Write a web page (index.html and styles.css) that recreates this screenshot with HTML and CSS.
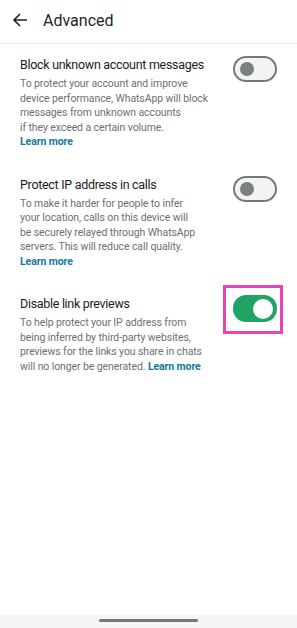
FILE: index.html
```html
<!DOCTYPE html>
<html lang="en">

<head>
    <meta charset="UTF-8">
    <meta name="viewport" content="width=device-width, initial-scale=1.0">
    <title>Advanced</title>
    <link rel="stylesheet" href="styles.css">
</head>

<body>
    <div class="screen">
        <header class="top-bar">
            <svg class="back" width="16" height="16" viewBox="0 0 16 16">
                <path d="M15 8H2M8 2L2 8l6 6" fill="none" stroke="#1f1f1f" stroke-width="1.6" />
            </svg>
            <h1>Advanced</h1>
        </header>

        <main class="settings">
            <div class="row">
                <div class="text">
                    <div class="title">Block unknown account messages</div>
                    <p class="desc">To protect your account and improve<br>device performance, WhatsApp will block<br>messages from unknown accounts<br>if they exceed a certain volume.<br><a href="#" class="link">Learn more</a></p>
                </div>
                <div class="switch"><span class="knob"></span></div>
            </div>

            <div class="row">
                <div class="text">
                    <div class="title">Protect IP address in calls</div>
                    <p class="desc">To make it harder for people to infer<br>your location, calls on this device will<br>be securely relayed through WhatsApp<br>servers. This will reduce call quality.<br><a href="#" class="link">Learn more</a></p>
                </div>
                <div class="switch"><span class="knob"></span></div>
            </div>

            <div class="row">
                <div class="text">
                    <div class="title">Disable link previews</div>
                    <p class="desc">To help protect your IP address from<br>being inferred by third-party websites,<br>previews for the links you share in chats<br>will no longer be generated. <a href="#" class="link">Learn more</a></p>
                </div>
                <div class="highlight">
                    <div class="switch on"><span class="knob"></span></div>
                </div>
            </div>
        </main>

        <div class="nav-bar"><span class="handle"></span></div>
    </div>
</body>

</html>
```

FILE: styles.css
```css
body {
    margin: 0;
    font-family: Roboto, 'Noto Sans', sans-serif;
    background-color: #fff;
}

.screen {
    height: 628px;
    display: flex;
    flex-direction: column;
}

.top-bar {
    height: 43px;
    display: flex;
    align-items: center;
    padding-left: 12px;
    border-bottom: 1px solid #ededed;
    box-sizing: content-box;
}

.back {
    margin-right: 15px;
    margin-top: -3px;
}

.top-bar h1 {
    margin: 0 0 3px 0;
    font-size: 16px;
    font-weight: 400;
    color: #1f1f1f;
}

.settings {
    flex: 1;
    padding: 12px 20px 0 20px;
    display: flex;
    flex-direction: column;
    gap: 26px;
}

.row {
    display: flex;
    align-items: flex-start;
    justify-content: space-between;
}

.title {
    font-size: 12.5px;
    line-height: 18px;
    letter-spacing: -0.3px;
    color: #1c1c1c;
}

.desc {
    margin: 3px 0 0 0;
    font-size: 10.5px;
    line-height: 14.5px;
    letter-spacing: -0.1px;
    color: #6d7073;
}

.link {
    color: #13789f;
    font-weight: 700;
    text-decoration: none;
}

.switch {
    height: 22px;
    border: 2px solid #73787b;
    border-radius: 13px;
    background-color: #f3f3f3;
    display: flex;
    align-items: center;
    padding-left: 5px;
    box-sizing: content-box;
    flex-shrink: 0;
    width: 35px;
}

.knob {
    width: 14px;
    height: 14px;
    border-radius: 50%;
    background-color: #7a7f82;
}

.switch.on {
    border-color: #1fa463;
    background-color: #1fa463;
    justify-content: flex-end;
    padding-left: 0;
    padding-right: 2px;
    width: 38px;
    height: 23px;
}

.switch.on .knob {
    width: 20px;
    height: 20px;
    background-color: #fff;
}

.highlight {
    position: relative;
}

.highlight::after {
    content: "";
    position: absolute;
    left: -10px;
    right: -6px;
    top: -10px;
    bottom: -12px;
    border: 3px solid #e645b5;
}

.nav-bar {
    height: 13px;
    background-color: #f4f5f7;
    display: flex;
    justify-content: center;
    padding-top: 4px;
    box-sizing: border-box;
}

.handle {
    width: 99px;
    height: 3px;
    border-radius: 2px;
    background-color: #777;
}
```
